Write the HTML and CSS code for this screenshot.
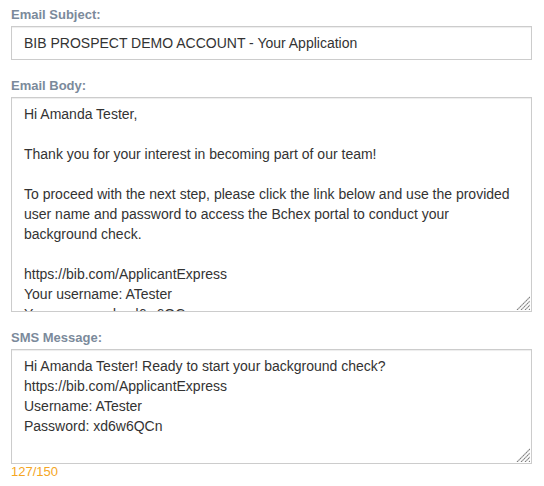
FILE: index.html
```html
<!DOCTYPE html>
<html>
<head>
<meta charset="utf-8">
<link rel="stylesheet" href="styles.css">
</head>
<body>
<div class="form">
  <div class="group">
    <label class="field-label" for="subject">Email Subject:</label>
    <input class="control" id="subject" type="text" value="BIB PROSPECT DEMO ACCOUNT - Your Application">
  </div>
  <div class="group">
    <label class="field-label" for="body">Email Body:</label>
    <div class="area-wrap">
      <textarea class="control area body-area" id="body">Hi Amanda Tester,

Thank you for your interest in becoming part of our team!

To proceed with the next step, please click the link below and use the provided user name and password to access the Bchex portal to conduct your background check.

https://bib.com/ApplicantExpress
Your username: ATester
Your password: xd6w6QCn</textarea>
      <svg class="grip" width="14" height="14" viewBox="0 0 14 14"><path d="M1 14L14 1M5 14L14 5M9 14L14 9M13 14L14 13" stroke="#7d7d7d" stroke-width="1.1" stroke-dasharray="1.6 0.5" fill="none"/></svg>
    </div>
  </div>
  <div class="group">
    <label class="field-label" for="sms">SMS Message:</label>
    <div class="area-wrap">
      <textarea class="control area sms-area" id="sms">Hi Amanda Tester! Ready to start your background check?
https://bib.com/ApplicantExpress
Username: ATester
Password: xd6w6QCn</textarea>
      <svg class="grip" width="14" height="14" viewBox="0 0 14 14"><path d="M1 14L14 1M5 14L14 5M9 14L14 9M13 14L14 13" stroke="#7d7d7d" stroke-width="1.1" stroke-dasharray="1.6 0.5" fill="none"/></svg>
    </div>
    <div class="counter">127/150</div>
  </div>
</div>
</body>
</html>
```
FILE: styles.css
```css
html, body {
  margin: 0;
  padding: 0;
  background: #fff;
}
body {
  font-family: "Liberation Sans", Arial, sans-serif;
}
.form {
  width: 521px;
  margin-left: 11px;
  padding-top: 7px;
}
.group {
  display: flex;
  flex-direction: column;
}
.group + .group {
  margin-top: 18px;
}
.field-label {
  display: block;
  font-size: 13px;
  font-weight: bold;
  line-height: 16px;
  color: #7b8a9b;
  margin-bottom: 3px;
}
.control {
  box-sizing: border-box;
  width: 521px;
  margin: 0;
  border: 1px solid #ccc;
  border-radius: 0;
  box-shadow: inset 0 1px 1px rgba(0, 0, 0, 0.075);
  padding: 6px 12px;
  font-family: "Liberation Sans", Arial, sans-serif;
  font-size: 14px;
  line-height: 20px;
  color: #333;
  background: #fff;
  outline: none;
}
input.control {
  height: 34px;
}
.area-wrap {
  position: relative;
}
.area {
  display: block;
  resize: none;
  overflow: hidden;
}
.body-area {
  height: 215px;
}
.sms-area {
  height: 115px;
}
.grip {
  position: absolute;
  right: 2px;
  bottom: 2px;
  display: block;
}
.counter {
  font-size: 13px;
  line-height: 16px;
  color: #f5a623;
  margin-top: 0;
}
```
